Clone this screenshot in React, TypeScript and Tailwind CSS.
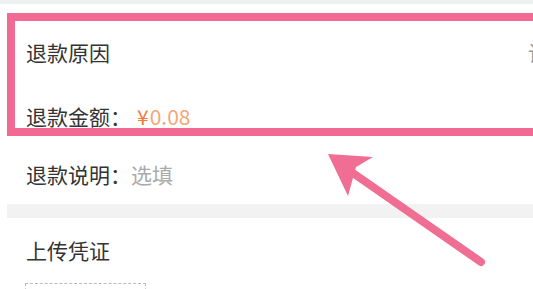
import React from "react";

const font = { fontFamily: '"Noto Sans CJK SC", "Noto Sans", sans-serif' };

export default function App() {
  return (
    <div className="relative w-[533px] h-[289px] overflow-hidden bg-white" style={font}>
      {/* top band */}
      <div className="h-[4px] bg-[#eef0ef]" />
      <div className="h-[9px]" />

      {/* highlighted block */}
      <div className="ml-[7px] w-[560px] h-[123px] border-[8px] border-[#f06a93] bg-white pl-[11px] flex flex-col">
        <div className="h-[63px] flex items-center text-[21px] leading-none text-[#333] whitespace-nowrap">
          <span>退款原因</span>
          <span className="ml-[418px] text-[#999]">请选择</span>
        </div>
        <div className="h-[44px] flex items-center text-[21px] leading-none text-[#333] pt-[20px]">
          <span>退款金额：</span>
          <span className="ml-[6px] text-[#f07d3a]">¥</span>
          <span className="ml-[1px] text-[#f3a877]">0.08</span>
        </div>
      </div>

      {/* note row */}
      <div className="h-[68px] flex items-center pl-[26px] pt-[8px] text-[21px] leading-none">
        <span className="text-[#333]">退款说明：</span>
        <span className="text-[#aaa]">选填</span>
      </div>

      {/* separator */}
      <div className="h-[14px] ml-[7px] bg-[#f2f2f2]" />

      {/* upload */}
      <div className="pl-[26px] pt-[22px] text-[21px] leading-none text-[#333]">上传凭证</div>
      <div className="ml-[25px] mt-[22px] w-[121px] h-[40px] border border-dashed border-[#bbb]" />

      {/* arrow */}
      <svg className="absolute left-0 top-0" width="533" height="289" viewBox="0 0 533 289">
        <line x1="481" y1="262" x2="350" y2="171" stroke="#f06d94" strokeWidth="8" strokeLinecap="round" />
        <polygon points="328,154 373,157 356,167 348,196" fill="#f06d94" />
      </svg>
    </div>
  );
}
